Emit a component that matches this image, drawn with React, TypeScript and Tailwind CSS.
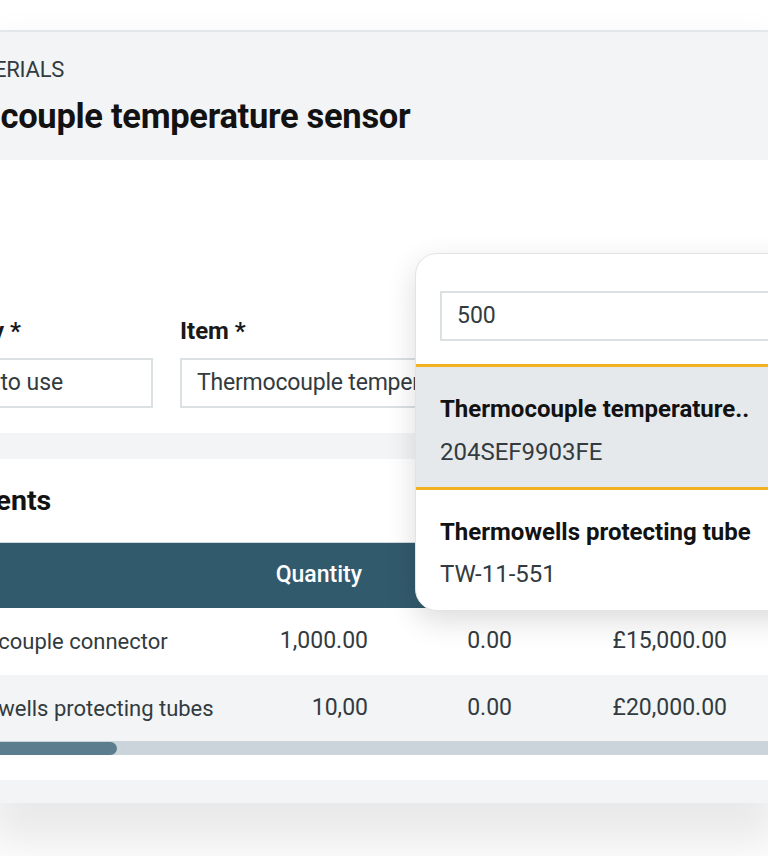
import React from "react";

export default function App() {
  return (
    <div className="relative w-[768px] h-[856px] overflow-hidden bg-white font-['Roboto','Liberation_Sans',sans-serif]">
      <div className="h-[30px] bg-white" />
      <div className="border-t-2 border-[#e4e7e9] shadow-[0_30px_40px_12px_rgba(0,0,0,0.085)] bg-white">
        {/* Header */}
        <div className="bg-[#f2f4f5] h-[128px] pt-[24px] flex flex-col gap-[12px] whitespace-nowrap">
          <div className="ml-[-51px] text-[22px] leading-[28px] text-[#333b40] tracking-[-0.2px]">MATERIALS</div>
          <div className="ml-[-119px] text-[34.5px] leading-[41px] font-bold text-[#121212] tracking-[-0.3px]">Thermocouple temperature sensor</div>
        </div>

        {/* Form */}
        <div className="bg-white pt-[156px] pb-[25px] flex gap-[27px] whitespace-nowrap">
          <div className="ml-[-84px] w-[237px] shrink-0 flex flex-col gap-[12px]">
            <div className="ml-[-10px] text-[24px] leading-[30px] font-bold text-[#191919]">Category *</div>
            <div className="h-[50px] border-2 border-[#dbe0e3] pl-[14px] flex items-center text-[23px] text-[#333b40]">Ready to use</div>
          </div>
          <div className="w-[420px] shrink-0 flex flex-col gap-[12px]">
            <div className="text-[24px] leading-[30px] font-bold text-[#191919]">Item *</div>
            <div className="h-[50px] border-2 border-[#dbe0e3] pl-[15px] flex items-center text-[23px] text-[#333b40] tracking-[-0.2px]">Thermocouple temperature sensor</div>
          </div>
        </div>

        <div className="h-[26px] bg-[#f2f4f5]" />

        {/* Components card */}
        <div className="bg-white">
          <div className="pt-[25px] pb-[24px] ml-[-112px] text-[28.5px] leading-[34px] font-bold text-[#121212] whitespace-nowrap">Components</div>
          <div className="border-t border-[#cfd8dd]">
            <div className="h-[65px] bg-[#325a6d] flex items-center ml-[-94px] text-white text-[23px] font-medium whitespace-nowrap">
              <div className="w-[318px] shrink-0 px-4">Item</div>
              <div className="w-[160px] shrink-0 pr-[22px] text-right">Quantity</div>
            </div>
            <div className="h-[67px] bg-white flex items-center ml-[-94px] text-[22px] text-[#333b40] whitespace-nowrap">
              <div className="w-[318px] shrink-0 px-4">Thermocouple connector</div>
              <div className="w-[160px] shrink-0 pr-4 text-right text-[23px]">1,000.00</div>
              <div className="w-[144px] shrink-0 pr-4 text-right text-[23px]">0.00</div>
              <div className="w-[215px] shrink-0 pr-4 text-right text-[23px]">£15,000.00</div>
            </div>
            <div className="h-[66px] bg-[#f2f4f5] flex items-center ml-[-94px] text-[22px] text-[#333b40] whitespace-nowrap">
              <div className="w-[318px] shrink-0 px-4">Thermowells protecting tubes</div>
              <div className="w-[160px] shrink-0 pr-4 text-right text-[23px]">10,00</div>
              <div className="w-[144px] shrink-0 pr-4 text-right text-[23px]">0.00</div>
              <div className="w-[215px] shrink-0 pr-4 text-right text-[23px]">£20,000.00</div>
            </div>
            <div className="h-[14px] bg-[#cbd4da] flex items-center">
              <div className="h-[13px] w-[117px] bg-[#5c7d8d] rounded-r-full" />
            </div>
          </div>
          <div className="h-[25px] bg-white" />
          <div className="h-[23px] bg-[#f2f4f5]" />
        </div>
      </div>

      {/* Dropdown */}
      <div className="absolute left-[415px] top-[253px] w-[420px] h-[358px] bg-white border border-[#e1e4e6] rounded-[22px] shadow-[0_10px_30px_rgba(0,0,0,0.14)] overflow-hidden whitespace-nowrap">
        <div className="pt-[37px] pl-[24px]">
          <div className="h-[50px] border-2 border-[#dbe0e3] pl-[15px] flex items-center text-[23px] text-[#333b40]">500</div>
        </div>
        <div className="mt-[23px] h-[3px] bg-[#f2b11e]" />
        <div className="bg-[#e6e9eb] pt-[27px] pb-[20px] pl-[24px] flex flex-col gap-[13px]">
          <div className="text-[24px] leading-[30px] font-bold text-[#121212]">Thermocouple temperature..</div>
          <div className="text-[24px] leading-[30px] text-[#333b40]">204SEF9903FE</div>
        </div>
        <div className="h-[3px] bg-[#f2b11e]" />
        <div className="pt-[27px] pl-[24px] flex flex-col gap-[12px]">
          <div className="text-[24px] leading-[30px] font-bold text-[#121212]">Thermowells protecting tube</div>
          <div className="text-[24px] leading-[30px] text-[#333b40]">TW-11-551</div>
        </div>
      </div>
    </div>
  );
}
